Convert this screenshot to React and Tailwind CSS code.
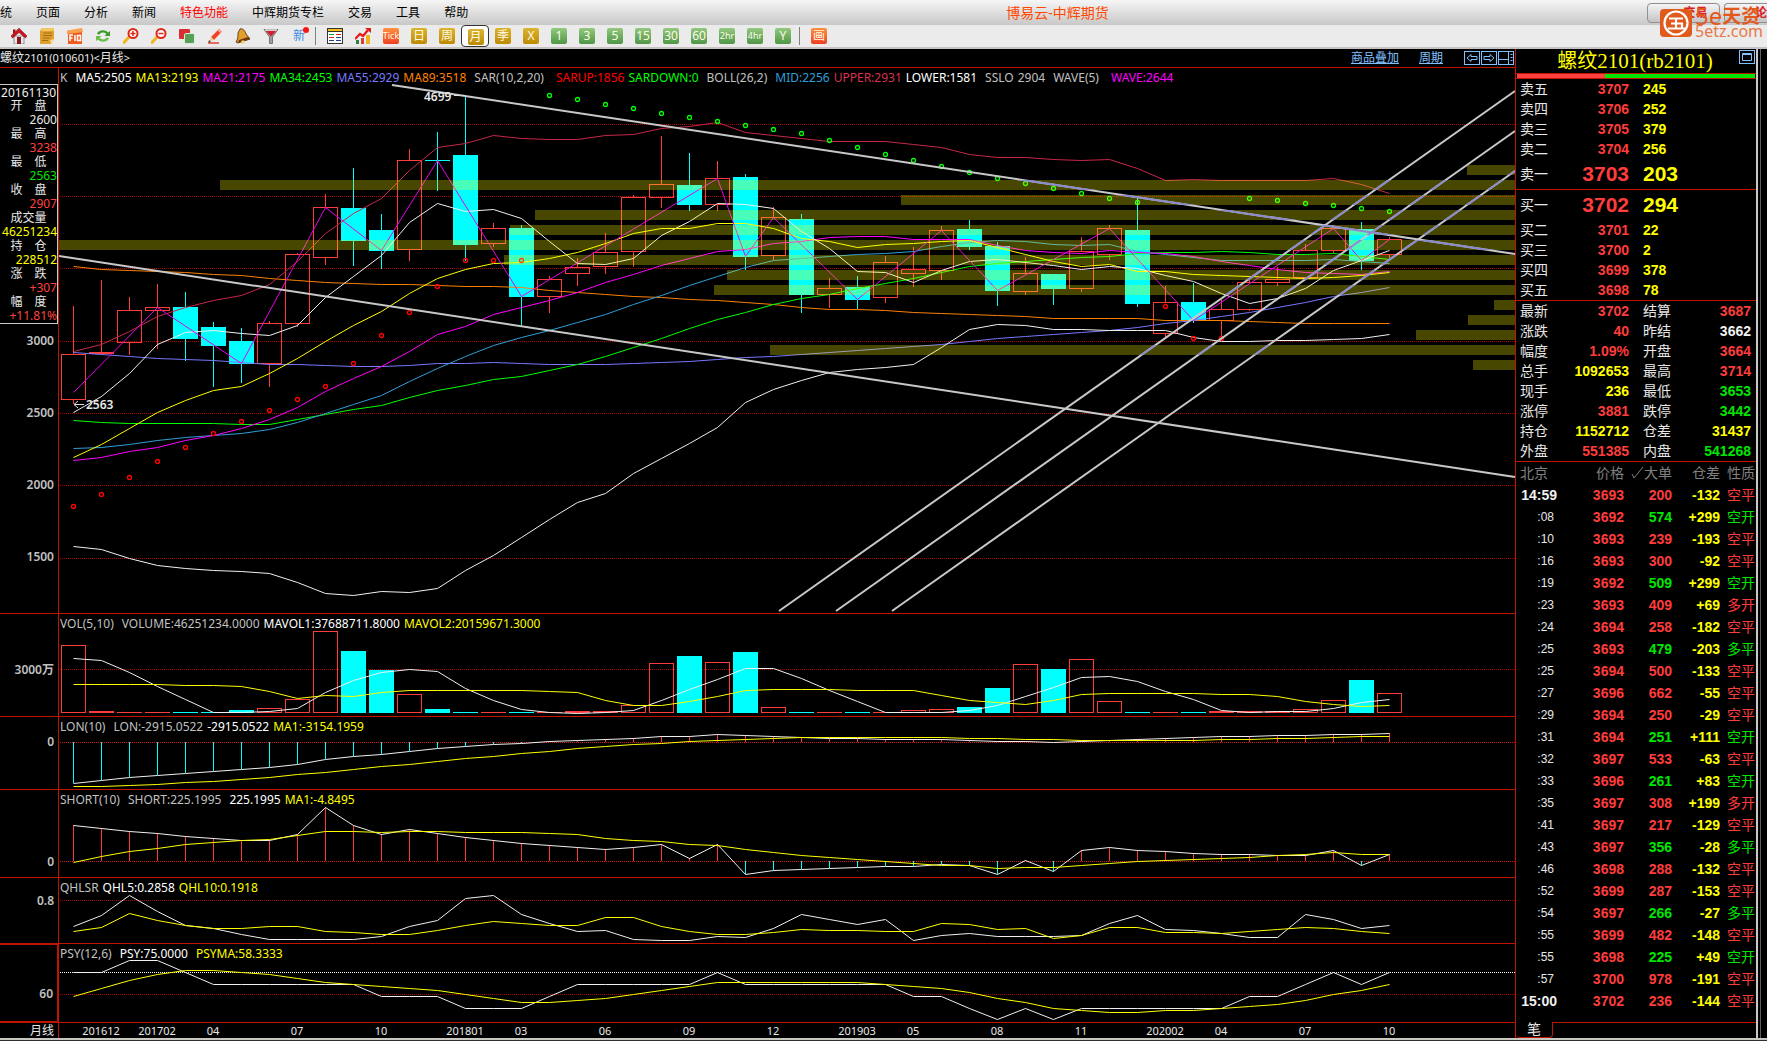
import React from "react";

const STEP = 28;
const xAt = (i) => 73.5 + i * STEP;
const linePoints = (ys) => ys.map((y, i) => `${xAt(i)},${y + 0.5}`).join(" ");

// [direction, high, body top, body bottom, low]
const CANDLES = [
  ["r", 306, 354, 399, 404], ["r", 280, 352, 353, 354], ["r", 297, 310, 342, 355], ["r", 284, 307, 310, 349],
  ["c", 292, 307, 339, 361], ["c", 322, 327, 346, 387], ["c", 328, 341, 364, 383], ["r", 321, 323, 363, 387],
  ["r", 253, 254, 323, 327], ["r", 194, 207, 257, 265], ["c", 168, 208, 241, 266], ["c", 214, 230, 251, 269],
  ["r", 149, 160, 249, 261], ["c", 132, 160, 161, 191], ["c", 96, 155, 245, 261], ["r", 223, 228, 243, 247],
  ["c", 225, 228, 297, 326], ["r", 276, 279, 296, 313], ["r", 258, 267, 273, 286], ["r", 233, 252, 266, 274],
  ["r", 195, 197, 251, 267], ["r", 136, 184, 197, 208], ["c", 153, 185, 205, 211], ["r", 161, 178, 204, 211],
  ["c", 174, 177, 257, 270], ["r", 207, 217, 255, 260], ["c", 214, 219, 295, 313], ["r", 278, 288, 294, 308],
  ["c", 276, 287, 300, 309], ["r", 256, 262, 297, 303], ["r", 247, 269, 273, 287], ["r", 226, 230, 270, 280],
  ["c", 220, 229, 247, 250], ["c", 242, 246, 291, 306], ["r", 257, 273, 291, 295], ["c", 274, 274, 289, 305],
  ["r", 237, 251, 288, 292], ["r", 225, 228, 254, 260], ["c", 198, 230, 304, 307], ["r", 286, 302, 333, 337],
  ["c", 283, 302, 320, 323], ["r", 300, 309, 320, 339], ["r", 280, 282, 309, 311], ["r", 267, 279, 282, 286],
  ["r", 244, 250, 277, 280], ["r", 225, 228, 250, 253], ["c", 222, 229, 261, 270], ["r", 237, 239, 254, 258],
];

const K_LINES = [
  { color: "#ff8000", ys: [266, 269, 270, 271, 272, 274, 275, 278, 280, 282, 283, 284, 284, 285, 286, 286, 287, 290, 292, 294, 296, 297, 299, 300, 302, 304, 307, 309, 309, 310, 312, 313, 314, 315, 316, 318, 318, 318, 318, 320, 320, 320, 321, 322, 323, 323, 323, 323] },
  { color: "#7777ff", ys: [352, 354, 356, 358, 359, 360, 362, 364, 364, 365, 366, 366, 365, 363, 363, 362, 363, 364, 364, 364, 363, 362, 361, 359, 357, 356, 354, 352, 350, 348, 346, 344, 341, 338, 336, 334, 332, 330, 327, 323, 320, 316, 312, 307, 302, 296, 292, 287] },
  { color: "#00ff00", ys: [420, 422, 423, 423, 423, 423, 424, 424, 419, 414, 409, 405, 397, 390, 385, 379, 376, 370, 364, 356, 347, 338, 328, 319, 312, 304, 298, 294, 288, 283, 278, 272, 266, 263, 261, 259, 257, 256, 253, 252, 252, 251, 252, 254, 254, 253, 256, 259] },
  { color: "#2f9fd8", ys: [448, 447, 444, 440, 437, 435, 433, 429, 422, 413, 404, 395, 381, 368, 356, 345, 337, 330, 322, 314, 304, 295, 285, 276, 267, 260, 258, 256, 254, 253, 251, 246, 242, 240, 241, 244, 245, 244, 251, 254, 257, 260, 260, 260, 260, 259, 261, 263] },
  { color: "#ff00ff", ys: [460, 457, 451, 447, 440, 435, 428, 419, 407, 391, 378, 366, 351, 334, 326, 314, 307, 300, 292, 282, 274, 265, 258, 251, 249, 243, 241, 237, 236, 236, 239, 239, 239, 245, 250, 252, 253, 250, 252, 253, 256, 261, 265, 269, 272, 273, 274, 271] },
  { color: "#ffff00", ys: [457, 444, 428, 412, 400, 390, 386, 373, 358, 341, 325, 311, 293, 278, 269, 263, 262, 258, 252, 243, 233, 228, 228, 223, 223, 228, 238, 241, 247, 244, 243, 241, 240, 247, 254, 261, 266, 264, 271, 271, 274, 275, 276, 277, 278, 277, 275, 272] },
  { color: "#c82848", ys: [351, 344, 331, 316, 307, 300, 295, 284, 261, 233, 213, 198, 170, 147, 143, 135, 138, 139, 139, 135, 134, 128, 126, 122, 132, 135, 138, 141, 141, 141, 144, 147, 154, 157, 157, 159, 160, 159, 168, 180, 179, 180, 180, 180, 180, 178, 184, 193] },
  { color: "#f0f0f0", ys: [412, 396, 373, 344, 332, 330, 333, 335, 325, 297, 276, 255, 222, 203, 211, 209, 218, 241, 263, 264, 258, 235, 221, 203, 204, 208, 231, 248, 271, 272, 282, 270, 261, 259, 262, 265, 269, 266, 268, 275, 281, 293, 303, 298, 288, 270, 260, 250] },
  { color: "#f0f0f0", ys: [546, 549, 558, 565, 568, 570, 571, 573, 582, 593, 595, 591, 592, 588, 570, 555, 537, 519, 502, 493, 473, 458, 443, 427, 402, 389, 380, 372, 369, 367, 364, 347, 329, 324, 325, 329, 329, 330, 330, 330, 337, 341, 341, 340, 340, 339, 338, 334] },
];

const WAVE = [[0, 392], [3, 307], [6, 363], [9, 207], [11, 250], [13, 160], [16, 296], [23, 178], [24, 256], [25, 217], [28, 299], [31, 230], [33, 290], [37, 228], [40, 320], [45, 228], [46, 260], [47, 239]];

const SAR_DOWN = [[17, 95], [18, 99], [19, 104], [20, 108], [21, 113], [22, 117], [23, 121], [24, 125], [25, 129], [26, 133], [27, 140], [28, 147], [29, 154], [30, 160], [31, 166], [32, 172], [33, 178], [34, 183], [35, 188], [36, 193], [37, 198], [38, 202], [42, 198], [43, 200], [44, 203], [45, 205], [46, 208], [47, 211]];
const SAR_UP = [[0, 506], [1, 494], [2, 477], [3, 461], [4, 447], [5, 433], [6, 421], [7, 410], [8, 399], [9, 386], [10, 363], [11, 335], [12, 312], [13, 286], [14, 260], [15, 260], [16, 260], [39, 306], [40, 338], [41, 338]];

// Price distribution bars: [left, top]
const PROFILE = [[1467, 165], [220, 180], [901, 195], [535, 210], [510, 225], [59, 240], [504, 255], [727, 270], [714, 285], [1494, 300], [1468, 315], [1416, 330], [770, 345], [1473, 360]];

const TRENDS = [[392, 85, 1515, 254], [59, 256, 1515, 477], [779, 611, 1515, 91], [836, 611, 1515, 131], [892, 611, 1515, 171]];

const VOL = [
  ["r", 645], ["r", 711], ["r", 712], ["r", 712], ["c", 712], ["c", 712], ["c", 710], ["r", 708], ["r", 699], ["r", 631],
  ["c", 651], ["c", 670], ["r", 694], ["c", 709], ["c", 712], ["r", 712], ["c", 712], ["r", 712], ["r", 711], ["r", 711],
  ["r", 705], ["r", 663], ["c", 656], ["r", 662], ["c", 652], ["r", 707], ["c", 712], ["r", 712], ["c", 712], ["r", 712],
  ["r", 710], ["r", 709], ["c", 707], ["c", 688], ["r", 664], ["c", 669], ["r", 659], ["r", 701], ["c", 712], ["r", 712],
  ["c", 712], ["r", 711], ["r", 711], ["r", 711], ["r", 709], ["r", 700], ["c", 680], ["r", 693],
];
const MAVOL1 = [658, 660, 672, 686, 699, 712, 712, 711, 708, 692, 680, 672, 669, 671, 688, 700, 709, 712, 713, 712, 710, 700, 689, 679, 668, 668, 678, 690, 701, 712, 712, 712, 710, 705, 696, 687, 677, 676, 681, 691, 699, 710, 712, 711, 711, 708, 702, 699];
const MAVOL2 = [684, 684, 684, 684, 685, 685, 686, 691, 698, 695, 696, 692, 690, 690, 690, 690, 690, 691, 692, 700, 705, 705, 701, 696, 690, 689, 689, 689, 690, 690, 690, 695, 700, 702, 704, 700, 694, 693, 693, 693, 693, 694, 694, 696, 701, 704, 706, 705];

const LON = [783, 780, 777, 775, 773, 771, 769, 767, 764, 759, 756, 754, 751, 748, 746, 744, 743, 741, 740, 739, 738, 736, 736, 734, 735, 736, 737, 738, 738, 739, 739, 739, 740, 741, 741, 742, 741, 740, 739, 738, 737, 736, 736, 735, 735, 734, 734, 733];
const LON_MA = [786, 786, 785, 784, 782, 781, 779, 777, 774, 772, 769, 766, 764, 761, 758, 756, 753, 751, 748, 746, 744, 743, 741, 740, 739, 738, 737, 737, 737, 737, 737, 737, 738, 738, 739, 739, 740, 740, 740, 740, 740, 739, 739, 738, 738, 737, 736, 736];

const SHORT = [825, 828, 831, 833, 836, 838, 840, 840, 834, 807, 825, 834, 829, 833, 837, 840, 843, 845, 847, 849, 847, 844, 858, 844, 874, 870, 869, 868, 867, 866, 866, 864, 865, 874, 860, 871, 850, 847, 850, 851, 853, 854, 854, 855, 855, 850, 865, 854];
const SHORT_MA = [862, 856, 851, 848, 844, 842, 840, 839, 835, 831, 831, 832, 831, 831, 832, 832, 832, 833, 834, 838, 840, 841, 844, 845, 849, 852, 855, 857, 859, 861, 863, 865, 865, 868, 867, 867, 865, 863, 861, 860, 859, 858, 857, 855, 854, 852, 854, 854];

const QHL5 = [926, 915, 895, 911, 925, 928, 934, 939, 939, 939, 939, 936, 926, 920, 898, 895, 914, 923, 931, 930, 939, 940, 940, 936, 937, 928, 914, 919, 924, 919, 940, 935, 933, 936, 936, 936, 935, 923, 915, 929, 930, 933, 937, 937, 914, 919, 928, 925];
const QHL10 = [931, 927, 913, 920, 925, 928, 928, 926, 926, 931, 932, 934, 934, 930, 925, 921, 923, 925, 925, 917, 917, 926, 931, 934, 934, 932, 929, 930, 930, 931, 931, 923, 924, 929, 928, 938, 935, 927, 927, 932, 932, 933, 931, 929, 927, 928, 931, 933];

const PSY = [972, 972, 960, 960, 972, 984, 984, 984, 984, 984, 984, 996, 996, 996, 1008, 1008, 1008, 996, 984, 984, 984, 984, 984, 972, 984, 984, 984, 984, 984, 984, 996, 996, 1008, 1019, 1008, 1019, 1008, 1008, 1008, 1008, 1008, 1008, 996, 996, 984, 972, 984, 972];
const PSY_MA = [996, 988, 980, 974, 970, 970, 972, 974, 978, 982, 984, 986, 988, 990, 994, 998, 1002, 1002, 1000, 998, 994, 990, 986, 982, 982, 982, 982, 982, 982, 984, 986, 988, 992, 998, 1002, 1008, 1010, 1012, 1012, 1010, 1010, 1008, 1006, 1004, 1000, 994, 990, 984];

const MONTHS = [[1, "201612"], [3, "201702"], [5, "04"], [8, "07"], [11, "10"], [14, "201801"], [16, "03"], [19, "06"], [22, "09"], [25, "12"], [28, "201903"], [30, "05"], [33, "08"], [36, "11"], [39, "202002"], [41, "04"], [44, "07"], [47, "10"]];

const K_HEADER = [
  [["K", "text-[#c0c0c0] mr-1"], ["MA5:2505", "text-white"], ["MA13:2193", "text-[#ffff00]"], ["MA21:2175", "text-[#ff00ff]"], ["MA34:2453", "text-[#00ff00]"], ["MA55:2929", "text-[#7777ff]"], ["MA89:3518", "text-[#ff8000]"]],
  [["SAR(10,2,20)", "text-[#c0c0c0] mr-2"], ["SARUP:1856", "text-[#ff0000]"], ["SARDOWN:0", "text-[#00ff00]"]],
  [["BOLL(26,2)", "text-[#c0c0c0] mr-1"], ["MID:2256", "text-[#2f9fd8]"], ["UPPER:2931", "text-[#d83050]"], ["LOWER:1581", "text-white"]],
  [["SSLO", "text-[#c0c0c0]"], ["2904", "text-[#c0c0c0]"]],
  [["WAVE(5)", "text-[#c0c0c0] mr-2"], ["WAVE:2644", "text-[#ff00ff]"]],
];

const INFO = [
  ["开　盘", "2600", "text-[#e8e8e8]"],
  ["最　高", "3238", "text-[#ff4040]"],
  ["最　低", "2563", "text-[#00e600]"],
  ["收　盘", "2907", "text-[#ff4040]"],
  ["成交量", "46251234", "text-[#ffff00]"],
  ["持　仓", "228512", "text-[#ffff00]"],
  ["涨　跌", "+307", "text-[#ff4040]"],
  ["幅　度", "+11.81%", "text-[#ff4040]"],
];

const ASKS = [["卖五", 3707, 245], ["卖四", 3706, 252], ["卖三", 3705, 379], ["卖二", 3704, 256], ["卖一", 3703, 203]];
const BIDS = [["买一", 3702, 294], ["买二", 3701, 22], ["买三", 3700, 2], ["买四", 3699, 378], ["买五", 3698, 78]];

const R = "text-[#ff3c3c]";
const G = "text-[#00e600]";
const Y = "text-[#ffff00]";
const W = "text-[#f0f0f0]";
const STATS = [
  ["最新", "3702", R, "结算", "3687", R],
  ["涨跌", "40", R, "昨结", "3662", W],
  ["幅度", "1.09%", R, "开盘", "3664", R],
  ["总手", "1092653", Y, "最高", "3714", R],
  ["现手", "236", Y, "最低", "3653", G],
  ["涨停", "3881", R, "跌停", "3442", G],
  ["持仓", "1152712", Y, "仓差", "31437", Y],
  ["外盘", "551385", R, "内盘", "541268", G],
];

const TRADES = [
  ["14:59", 3693, 200, "-132", "空平", R], [":08", 3692, 574, "+299", "空开", G], [":10", 3693, 239, "-193", "空平", R],
  [":16", 3693, 300, "-92", "空平", R], [":19", 3692, 509, "+299", "空开", G], [":23", 3693, 409, "+69", "多开", R],
  [":24", 3694, 258, "-182", "空平", R], [":25", 3693, 479, "-203", "多平", G], [":25", 3694, 500, "-133", "空平", R],
  [":27", 3696, 662, "-55", "空平", R], [":29", 3694, 250, "-29", "空平", R], [":31", 3694, 251, "+111", "空开", G],
  [":32", 3697, 533, "-63", "空平", R], [":33", 3696, 261, "+83", "空开", G], [":35", 3697, 308, "+199", "多开", R],
  [":41", 3697, 217, "-129", "空平", R], [":43", 3697, 356, "-28", "多平", G], [":46", 3698, 288, "-132", "空平", R],
  [":52", 3699, 287, "-153", "空平", R], [":54", 3697, 266, "-27", "多平", G], [":55", 3699, 482, "-148", "空平", R],
  [":55", 3698, 225, "+49", "空开", G], [":57", 3700, 978, "-191", "空平", R], ["15:00", 3702, 236, "-144", "空平", R],
];

function Icon({ children }) {
  return <svg width="16" height="16" viewBox="0 0 16 16" aria-hidden="true">{children}</svg>;
}

const TOOL_ICONS = [
  ["首页", <Icon><path d="M3 8h10v8H3z" fill="#e8e8f0" stroke="#777" strokeWidth=".8" /><path d="M8 .5 0 8l1.500 2L8 4.500l6.500 5.500L16 8z" fill="#c8141e" /><path d="M8 0 0 8l1.500 2L8 4.500l6.500 5.500L16 8z" fill="none" stroke="#8c1018" strokeWidth=".6" /><path d="M2 1.500h2.500V4L2 6.500z" fill="#a01018" /><rect x="6" y="9" width="4" height="7" fill="#8c1a1a" /></Icon>],
  ["公告", <Icon><path d="M3 0h12v11l-3 5H1V3z" fill="#e0a02c" /><path d="M3 0h12v3H2z" fill="#f4c860" /><path d="M4 5h9M4 7.500h9M3.500 10h8M3 12.500h6" stroke="#a86c10" /><path d="m15 11-4 1 1 4z" fill="#f8dc90" /></Icon>],
  ["F10", <Icon><path d="M1 3h14v13H1z" fill="#f05a1e" /><path d="M0 2.500 15 0l1 4L0 6z" fill="#f8a050" /><path d="M3 13V7h3M3 10h2.500M8 7v6M10.500 7.500h3v5h-3z" stroke="#fff" strokeWidth="1.500" fill="none" /></Icon>],
  ["刷新", <Icon><path d="M2 6c1-4 8-5 11-1.500L15 3v5H9.500l2-2C9 4 6 4 4.500 6.500z" fill="#3c9a28" /><path d="M14 10c-1 4-8 5-11 1.500L1 13V8h5.500l-2 2c2.500 2 5.500 2 7-.5z" fill="#6ac048" /></Icon>],
  ["放大", <Icon><path d="m6 9-5 5.500" stroke="#f0b820" strokeWidth="3" strokeLinecap="round" /><circle cx="10" cy="5.500" r="4.500" fill="#fff" stroke="#e02818" strokeWidth="2" /><path d="M10 3v5M7.500 5.500h5" stroke="#e02818" strokeWidth="1.500" /></Icon>],
  ["缩小", <Icon><path d="m6 9-5 5.500" stroke="#f0b820" strokeWidth="3" strokeLinecap="round" /><circle cx="10" cy="5.500" r="4.500" fill="#fff" stroke="#e02818" strokeWidth="2" /><path d="M7.500 5.500h5" stroke="#e02818" strokeWidth="1.500" /></Icon>],
  ["叠加", <Icon><rect x="0" y="1" width="11" height="10" rx="1" fill="#d83030" /><rect x="5.500" y="5.500" width="10" height="10" rx="1.500" fill="#58a058" stroke="#d8ecd8" /></Icon>],
  ["画笔", <Icon><path d="M4 9 12 1l3 2.500L7 12z" fill="#f04428" /><path d="m12 1 3 2.500-1.500 1.500-3-2.500z" fill="#f8a8a0" /><path d="M4 9 2 13.500 7 12z" fill="#f0d090" /><path d="M1 15h11" stroke="#e04030" strokeWidth="1.500" /><circle cx="2.500" cy="13.500" r="1" fill="#333" /></Icon>],
  ["预警", <Icon><path d="M5 1c3-1 5 2 6 5l4 5-12 4-2-1c2-3 2-5 2-9z" fill="#e0a030" stroke="#704010" strokeWidth="1" /><path d="M3 14.500 15 11l-2-2L4 12z" fill="#703808" /><circle cx="8" cy="14" r="1.800" fill="#f8d070" /></Icon>],
  ["筛选", <Icon><path d="M1 1.500h14L9.500 9v6.500h-3V9z" fill="#a0a0a0" stroke="#606060" strokeWidth=".8" /><path d="M3 3h10L8 8.500z" fill="#d81c30" /><path d="M2 2h12" stroke="#f0f0f0" strokeWidth="1.200" /></Icon>],
];

const GOLD = "bg-linear-to-b from-[#dcb42c] to-[#bd8a00]";
const GREEN = "bg-linear-to-b from-[#93c97e] to-[#4f9646]";
const ORANGE = "bg-linear-to-b from-[#ff9040] to-[#ee3c22]";
const PERIODS = [
  ["Tick", ORANGE, "text-[9px]"], ["日", GOLD, "text-[12px]"], ["周", GOLD, "text-[12px]"], ["月", GOLD, "text-[12px]"],
  ["季", GOLD, "text-[12px]"], ["X", GOLD, "text-[12px]"], ["1", GREEN, "text-[12px]"], ["3", GREEN, "text-[12px]"],
  ["5", GREEN, "text-[12px]"], ["15", GREEN, "text-[12px]"], ["30", GREEN, "text-[12px]"], ["60", GREEN, "text-[12px]"],
  ["2hr", GREEN, "text-[9px]"], ["4hr", GREEN, "text-[9px]"], ["Y", GREEN, "text-[12px]"],
];

function Badge({ text, tone, size }) {
  return <span className={`flex h-4 w-4 items-center justify-center overflow-hidden rounded-xs leading-4 text-[#fffbe8] ${tone} ${size}`}>{text}</span>;
}

function ToolButton({ label, selected, children }) {
  return (
    <button type="button" aria-label={label} aria-pressed={selected} className={`flex h-[22px] w-7 shrink-0 items-center justify-center ${selected ? "rounded-sm border border-[#333] bg-white pt-px pl-px" : ""}`}>
      {children}
    </button>
  );
}

function Toolbar() {
  return (
    <div className="flex h-6 items-start overflow-hidden border-b-2 border-[#c8c2c2] bg-[#ebebeb] pl-[5px]">
      {TOOL_ICONS.map(([label, icon]) => <ToolButton key={label} label={label}>{icon}</ToolButton>)}
      <ToolButton label="新">
        <span className="relative text-[12px] leading-4 text-[#3c8ce0]">新<span className="absolute -top-px -right-1 h-[6px] w-[6px] rounded-full bg-[#ff1414]" /></span>
      </ToolButton>
      <span className="mt-[2px] mr-[5px] ml-[2px] h-[18px] w-px shrink-0 bg-[#808080]" />
      <ToolButton label="报价表">
        <Icon><rect x=".5" y=".5" width="15" height="15" fill="#fff" stroke="#333" /><path d="M1 2h14" stroke="#f0c020" strokeWidth="2" /><path d="M1 3.500h14" stroke="#333" /><path d="M2 6.500h5" stroke="#20a020" /><path d="M9 6.500h5" stroke="#e02020" /><path d="M2 9.500h5" stroke="#e02020" /><path d="M9 9.500h5M2 12.500h5M9 12.500h5" stroke="#204090" /></Icon>
      </ToolButton>
      <ToolButton label="走势">
        <Icon><path d="M1 12h3v4H1z" fill="#308040" /><path d="M6 10h3v6H6z" fill="#d04040" /><path d="M11 7h4v9h-4z" fill="#f0b020" /><path d="m0 11 5-5 3 2 5-6" fill="none" stroke="#e81818" strokeWidth="2.200" /><path d="M10 0h6v5z" fill="#e81818" /></Icon>
      </ToolButton>
      {PERIODS.map(([text, tone, size]) => (
        <ToolButton key={text} label={text} selected={text === "月"}><Badge text={text} tone={tone} size={size} /></ToolButton>
      ))}
      <span className="mt-[2px] mr-[5px] ml-[2px] h-[18px] w-px shrink-0 bg-[#808080]" />
      <ToolButton label="画线"><Badge text="画" tone={ORANGE} size="text-[12px]" /></ToolButton>
    </div>
  );
}

function MenuBar() {
  return (
    <header className="flex h-[25px] items-center overflow-hidden bg-linear-to-b from-[#f6f6f6] to-[#c8c8c8] text-[12px] text-black">
      <nav className="flex shrink-0 gap-6 whitespace-nowrap">
        {["统", "页面", "分析", "新闻", "特色功能", "中辉期货专栏", "交易", "工具", "帮助"].map((m) => (
          <button key={m} type="button" className={m === "特色功能" ? "text-[#ff0000]" : ""}>{m}</button>
        ))}
      </nav>
      <h1 className="flex-1 text-center text-[14px] whitespace-nowrap text-[#ff4800]">博易云-中辉期货</h1>
      <button type="button" className="flex h-5 w-[73px] items-center justify-center rounded-sm border border-[#909090] bg-linear-to-b from-[#f4f4f4] to-[#c4c4c4] pl-6 font-bold text-[#d82020]">交易</button>
      <button type="button" className="ml-1 flex h-5 w-[43px] items-center justify-end overflow-hidden rounded-l-sm border border-r-0 border-[#909090] bg-linear-to-b from-[#f4f4f4] to-[#c4c4c4] font-bold text-[#d82020]">论</button>
    </header>
  );
}

function Watermark() {
  return (
    <div className="absolute top-[7px] right-1 flex items-center gap-[3px] whitespace-nowrap text-[#e4581c]">
      <svg width="32" height="31" viewBox="0 0 32 31" aria-hidden="true">
        <rect x="0" y="2" width="32" height="28" rx="4" fill="#e05a1c" />
        <circle cx="16" cy="16" r="11.500" fill="none" stroke="#fff" strokeWidth="2.200" />
        <path d="M9 11.500h14M16 11.500v10M11 16.500h11v5M8 21.500h17" fill="none" stroke="#fff" strokeWidth="2.200" />
      </svg>
      <div className="flex w-[68px] flex-col">
        <span className="flex items-center leading-4 font-bold"><span className="text-[24px] font-normal">5e</span><span className="text-[19px]">天资</span></span>
        <span className="text-[16px] leading-[14px] text-[#e87848]">5etz.com</span>
      </div>
    </div>
  );
}

function Grid({ ys, color = "#a80000" }) {
  return ys.map((y) => <line key={y} x1="60" x2="1515" y1={y + 0.5} y2={y + 0.5} stroke={color} strokeDasharray="1 1" shapeRendering="crispEdges" />);
}

function Plot({ top, height, label, className, children }) {
  return (
    <svg viewBox={`59 ${top} 1456 ${height}`} preserveAspectRatio="none" role="img" aria-label={label} className={`block w-full overflow-visible ${className}`}>
      {children}
    </svg>
  );
}

function Curve({ ys, color }) {
  return <polyline points={linePoints(ys)} fill="none" stroke={color} strokeWidth="1" />;
}

function Sticks({ ys, zero }) {
  return (
    <g shapeRendering="crispEdges">
      {ys.map((y, i) => <line key={i} x1={xAt(i)} x2={xAt(i)} y1={zero} y2={y} stroke={y > zero ? "#00ffff" : "#ff3c3c"} />)}
    </g>
  );
}

function Header({ items }) {
  return (
    <div className="flex h-[17px] items-start gap-1 pl-px leading-[19px] whitespace-nowrap">
      {items.map(([t, c]) => <span key={t} className={c}>{t}</span>)}
    </div>
  );
}

function Panel({ axis, children }) {
  return (
    <section className="flex border-b border-[#c01400]">
      {axis}
      <div className="min-w-0 flex-1">{children}</div>
    </section>
  );
}

function Axis({ text, className }) {
  return <div className={`w-[59px] shrink-0 border-r border-[#c01400] text-right leading-[18px] font-semibold text-[#c0c0c0] ${className}`}>{text}</div>;
}

function KPlot() {
  return (
    <Plot top={85} height={528} label="K线" className="h-[528px]">
      <defs>
        <clipPath id="profile">{PROFILE.map(([x, y]) => <rect key={y} x={x} y={y} width={1515 - x} height="10" />)}</clipPath>
      </defs>
      <Grid ys={[124, 196, 268, 341, 413, 485, 558]} />
      <g shapeRendering="crispEdges">
        {CANDLES.map(([d, hi, top, bot, lo], i) => {
          const x = xAt(i);
          if (d === "c") {
            return (
              <g key={i} fill="#00ffff" stroke="none">
                <rect x={x - 0.5} y={hi} width="1" height={lo - hi} />
                <rect x={x - 12.5} y={top} width="25" height={bot - top} />
              </g>
            );
          }
          return (
            <g key={i} fill="none" stroke="#ff3c3c">
              <path d={`M${x} ${hi}V${top}M${x} ${bot}V${lo}`} />
              <rect x={x - 12} y={top + 0.5} width="24" height={bot - top} />
            </g>
          );
        })}
      </g>
      {K_LINES.map((l, i) => <Curve key={i} {...l} />)}
      <polyline points={WAVE.map(([i, y]) => `${xAt(i)},${y + 0.5}`).join(" ")} fill="none" stroke="#e800e8" />
      <g fill="none" stroke="#00ff00" strokeWidth="1.300">{SAR_DOWN.map(([i, y]) => <ellipse key={i} cx={xAt(i)} cy={y + 0.5} rx="2" ry="2" />)}</g>
      <g fill="none" stroke="#ff0000" strokeWidth="1.300">{SAR_UP.map(([i, y]) => <ellipse key={i} cx={xAt(i)} cy={y + 0.5} rx="2" ry="2" />)}</g>
      <g fill="#ffff00" fillOpacity=".28">{PROFILE.map(([x, y]) => <rect key={y} x={x} y={y} width={1515 - x} height="10" />)}</g>
      <g stroke="#c8c8c8" strokeWidth="2">{TRENDS.map(([a, b, c, d]) => <line key={a} x1={a} y1={b} x2={c} y2={d} />)}</g>
      <g stroke="#8a8acc" strokeWidth="2" clipPath="url(#profile)">{TRENDS.map(([a, b, c, d]) => <line key={a} x1={a} y1={b} x2={c} y2={d} />)}</g>
      <path d="M454 95.500h6M462 95.500h3M74 404.500h10M78 401l-4 3.500 4 3.500" fill="none" stroke="#e0e0e0" />
      <text x="424" y="101" fill="#e8e8e8" className="text-[12px] font-semibold">4699</text>
      <text x="86" y="409" fill="#e8e8e8" className="text-[12px] font-semibold">2563</text>
    </Plot>
  );
}

function KAxis() {
  return (
    <div className="w-[59px] shrink-0 border-r border-[#c01400] pt-4 text-[#c0c0c0]">
      <div className="border border-l-0 border-[#c8c8c8]">
        <p className="h-[14px] pr-px text-right leading-4 text-[#f0f0f0]">20161130</p>
        <dl>
          {INFO.map(([k, v, c]) => (
            <div key={k}>
              <dt className="h-[14px] text-center leading-[14px] text-[#e8e8e8]">{k}</dt>
              <dd className={`h-[14px] text-right leading-[14px] ${c}`}>{v}</dd>
            </div>
          ))}
        </dl>
      </div>
      <div className="flex flex-col gap-[54px] pt-2 pr-1 text-right leading-[18px] font-semibold">
        {["3000", "2500", "2000", "1500"].map((t) => <span key={t}>{t}</span>)}
      </div>
    </div>
  );
}

function Charts() {
  return (
    <main className="flex min-w-0 flex-1 flex-col text-[12px]">
      <div className="flex h-[19px] items-center border-b border-[#c01400] pr-px text-[#e8e8e8]">
        <h2 className="whitespace-nowrap">螺纹<span className="text-[11px]">2101(010601)&lt;</span>月线<span className="text-[11px]">&gt;</span></h2>
        <div className="ml-auto flex items-center whitespace-nowrap text-[#80c0ff]">
          <a href="#overlay" className="mr-5 leading-4 underline">商品叠加</a>
          <a href="#period" className="mr-[21px] leading-4 underline">周期</a>
          <div className="flex gap-px">
            {[
              ["左移", "M3 7 7 3.500V5.500h6v3H7v2z"],
              ["右移", "M13 7 9 3.500V5.500H3v3h6v2z"],
              ["布局", "M0 8.500h10.500M10.500 0v14M12.500 3.500h2M12.500 6.500h2M12.500 9.500h2"],
            ].map(([label, d]) => (
              <button key={label} type="button" aria-label={label}>
                <svg width="16" height="14" viewBox="0 0 16 14" fill="none" stroke="#80c0ff"><rect x=".5" y=".5" width="15" height="13" /><path d={d} /></svg>
              </button>
            ))}
          </div>
        </div>
      </div>

      <Panel axis={<KAxis />}>
        <div className="flex h-[17px] items-start gap-2 pl-px leading-[19px] whitespace-nowrap">
          {K_HEADER.map((group, i) => <div key={i} className="flex gap-1">{group.map(([t, c]) => <span key={t} className={c}>{t}</span>)}</div>)}
        </div>
        <KPlot />
      </Panel>

      <Panel axis={<Axis text="3000万" className="pt-[47px] pr-1" />}>
        <Header items={[["VOL(5,10)", "mr-1 text-[#c0c0c0]"], ["VOLUME:46251234.0000", "text-[#c0c0c0]"], ["MAVOL1:37688711.8000", "text-white"], ["MAVOL2:20159671.3000", "text-[#ffff00]"]]} />
        <Plot top={631} height={85} label="成交量" className="h-[85px]">
          <Grid ys={[669]} />
          <g shapeRendering="crispEdges">
            {VOL.map(([d, y], i) => d === "c"
              ? <rect key={i} x={xAt(i) - 12.5} y={y} width="25" height={713 - y} fill="#00ffff" />
              : <rect key={i} x={xAt(i) - 12} y={y + 0.5} width="24" height={Math.max(712 - y, 0.01)} fill="none" stroke="#ff3c3c" />)}
          </g>
          <Curve ys={MAVOL1} color="#f0f0f0" />
          <Curve ys={MAVOL2} color="#ffff00" />
        </Plot>
      </Panel>

      <Panel axis={<Axis text="0" className="pt-4 pr-1" />}>
        <Header items={[["LON(10)", "mr-1 text-[#c0c0c0]"], ["LON:-2915.0522", "text-[#c0c0c0]"], ["-2915.0522", "text-white"], ["MA1:-3154.1959", "text-[#ffff00]"]]} />
        <Plot top={734} height={55} label="LON" className="h-[55px]">
          <Grid ys={[742]} color="#d01818" />
          <Sticks ys={LON} zero={742} />
          <Curve ys={LON} color="#f0f0f0" />
          <Curve ys={LON_MA} color="#ffff00" />
        </Plot>
      </Panel>

      <Panel axis={<Axis text="0" className="pt-[63px] pr-1" />}>
        <Header items={[["SHORT(10)", "mr-1 text-[#c0c0c0]"], ["SHORT:225.1995", "mr-1 text-[#c0c0c0]"], ["225.1995", "text-white"], ["MA1:-4.8495", "text-[#ffff00]"]]} />
        <Plot top={807} height={70} label="SHORT" className="h-[70px]">
          <Grid ys={[861]} color="#d01818" />
          <Sticks ys={SHORT} zero={861} />
          <Curve ys={SHORT} color="#f0f0f0" />
          <Curve ys={SHORT_MA} color="#ffff00" />
        </Plot>
      </Panel>

      <Panel axis={<Axis text="0.8" className="pt-[14px] pr-1" />}>
        <Header items={[["QHLSR", "text-[#c0c0c0]"], ["QHL5:0.2858", "text-white"], ["QHL10:0.1918", "text-[#ffff00]"]]} />
        <Plot top={895} height={48} label="QHLSR" className="h-[48px]">
          <Grid ys={[900]} />
          <Curve ys={QHL5} color="#f0f0f0" />
          <Curve ys={QHL10} color="#ffff00" />
        </Plot>
      </Panel>

      <Panel axis={<Axis text="60" className="border-y border-r-2 pt-10 pr-1" />}>
        <Header items={[["PSY(12,6)", "mr-1 text-[#c0c0c0]"], ["PSY:75.0000", "mr-1 text-white"], ["PSYMA:58.3333", "text-[#ffff00]"]]} />
        <Plot top={961} height={61} label="PSY" className="h-[61px]">
          <Grid ys={[994]} />
          <Grid ys={[972]} color="#ffffff" />
          <Curve ys={PSY} color="#f0f0f0" />
          <Curve ys={PSY_MA} color="#ffff00" />
        </Plot>
      </Panel>

      <div className="flex h-[15px] leading-[15px] text-[#e8e8e8]">
        <span className="w-[59px] shrink-0 border-r border-[#c01400] pr-1 text-right">月线</span>
        <div className="grid min-w-0 flex-1 grid-cols-[repeat(52,minmax(0,1fr))] text-[11px]">
          {MONTHS.map(([i, t]) => <span key={i} className="flex justify-center whitespace-nowrap" style={{ gridColumnStart: i + 1 }}>{t}</span>)}
        </div>
      </div>
    </main>
  );
}

function Book({ rows, best }) {
  return (
    <table className="w-full table-fixed border-b border-[#c01400]">
      <colgroup><col className="w-[42px]" /><col className="w-[71px]" /><col /></colgroup>
      <tbody>
        {rows.map(([k, p, v]) => (
          <tr key={k} className={k === best ? "h-[30px] text-[21px]" : "h-5"}>
            <th scope="row" className="pl-1 text-left text-[14px] font-normal whitespace-nowrap text-[#e8e8e8]">{k}</th>
            <td className="text-right font-bold text-[#ff3c3c]">{p}</td>
            <td className="pl-[14px] font-bold text-[#ffff00]">{v}</td>
          </tr>
        ))}
      </tbody>
    </table>
  );
}

function QuotePanel() {
  return (
    <aside className="flex w-[241px] shrink-0 flex-col border-l border-[#c01400] text-[14px] leading-5">
      <div className="flex h-6 items-center justify-between pr-px">
        <h2 className="flex-1 pl-[15px] text-center text-[20px] leading-6 whitespace-nowrap text-[#ffff00] [font-family:'Liberation_Serif','Noto_Sans_CJK_SC',serif]">螺纹<span className="text-[21px]">2101(rb2101)</span></h2>
        <button type="button" aria-label="最大化" className="mb-2">
          <svg width="16" height="14" viewBox="0 0 16 14" fill="none" stroke="#80c0ff"><rect x=".5" y=".5" width="15" height="13" /><path d="M3.500 3.500h9v7h-9zM3.500 4.500h9" /></svg>
        </button>
      </div>
      <div className="flex h-[6px] border-y border-[#c01400] px-px">
        <span className="w-[37%] bg-[#ff4040]" /><span className="flex-1 bg-[#00e600]" />
      </div>
      <Book rows={ASKS} best="卖一" />
      <Book rows={BIDS} best="买一" />
      <table className="w-full table-fixed border-b border-[#c01400]">
        <colgroup><col className="w-[42px]" /><col className="w-[71px]" /><col className="w-[51px]" /><col /></colgroup>
        <tbody>
          {STATS.map(([a, av, ac, b, bv, bc]) => (
            <tr key={a} className="h-5">
              <th scope="row" className="pl-1 text-left font-normal whitespace-nowrap text-[#e8e8e8]">{a}</th>
              <td className={`text-right font-bold ${ac}`}>{av}</td>
              <th scope="row" className="pl-[14px] text-left font-normal whitespace-nowrap text-[#e8e8e8]">{b}</th>
              <td className={`pr-[5px] text-right font-bold ${bc}`}>{bv}</td>
            </tr>
          ))}
        </tbody>
      </table>
      <table className="w-full table-fixed text-right whitespace-nowrap">
        <colgroup><col className="w-[41px]" /><col className="w-[67px]" /><col className="w-[48px]" /><col className="w-[48px]" /><col /></colgroup>
        <thead>
          <tr className="h-[22px] text-[#808080]">
            <th className="pl-1 text-left font-normal">北京</th>
            <th className="font-normal">价格</th>
            <th className="font-normal"><span className="flex items-center justify-end"><svg width="13" height="14" viewBox="0 0 13 14" fill="none" stroke="#808080" aria-hidden="true"><path d="m1 8 2 4L12 1" /></svg>大单</span></th>
            <th className="font-normal">仓差</th>
            <th className="pr-px font-normal">性质</th>
          </tr>
        </thead>
        <tbody>
          {TRADES.map(([t, p, v, d, n, c], i) => (
            <tr key={i} className="h-[22px] font-bold">
              <td className={t.length > 3 ? "text-[#f0f0f0]" : "pr-[3px] text-[12px] font-normal text-[#e8e8e8]"}>{t}</td>
              <td className={R}>{p}</td>
              <td className={c === G ? G : R}>{v}</td>
              <td className={Y}>{d}</td>
              <td className={`pr-px font-normal ${c}`}>{n}</td>
            </tr>
          ))}
        </tbody>
      </table>
      <div className="mt-auto flex h-4">
        <button type="button" className="h-4 w-[37px] rounded-b-sm border-r border-b border-[#c01400] text-center leading-[15px] text-[#e8e8e8]">笔</button>
        <span className="flex-1 border-t border-[#c01400]" />
      </div>
    </aside>
  );
}

export default function App() {
  return (
    <div className="relative flex min-h-screen flex-col overflow-hidden bg-black font-['Noto_Sans','Noto_Sans_CJK_SC',sans-serif]">
      <MenuBar />
      <Toolbar />
      <Watermark />
      <div className="flex flex-1">
        <Charts />
        <div className="flex [font-family:'Liberation_Sans','Noto_Sans_CJK_SC',sans-serif]"><QuotePanel /></div>
        <div className="w-[11px] shrink-0 border-l-2 border-[#c8c8c8] pl-[2px]"><div className="h-full border-l border-[#606060]" /></div>
      </div>
      <footer className="h-[3px] border-t-2 border-[#c8c8c0] bg-[#303030]" />
    </div>
  );
}
